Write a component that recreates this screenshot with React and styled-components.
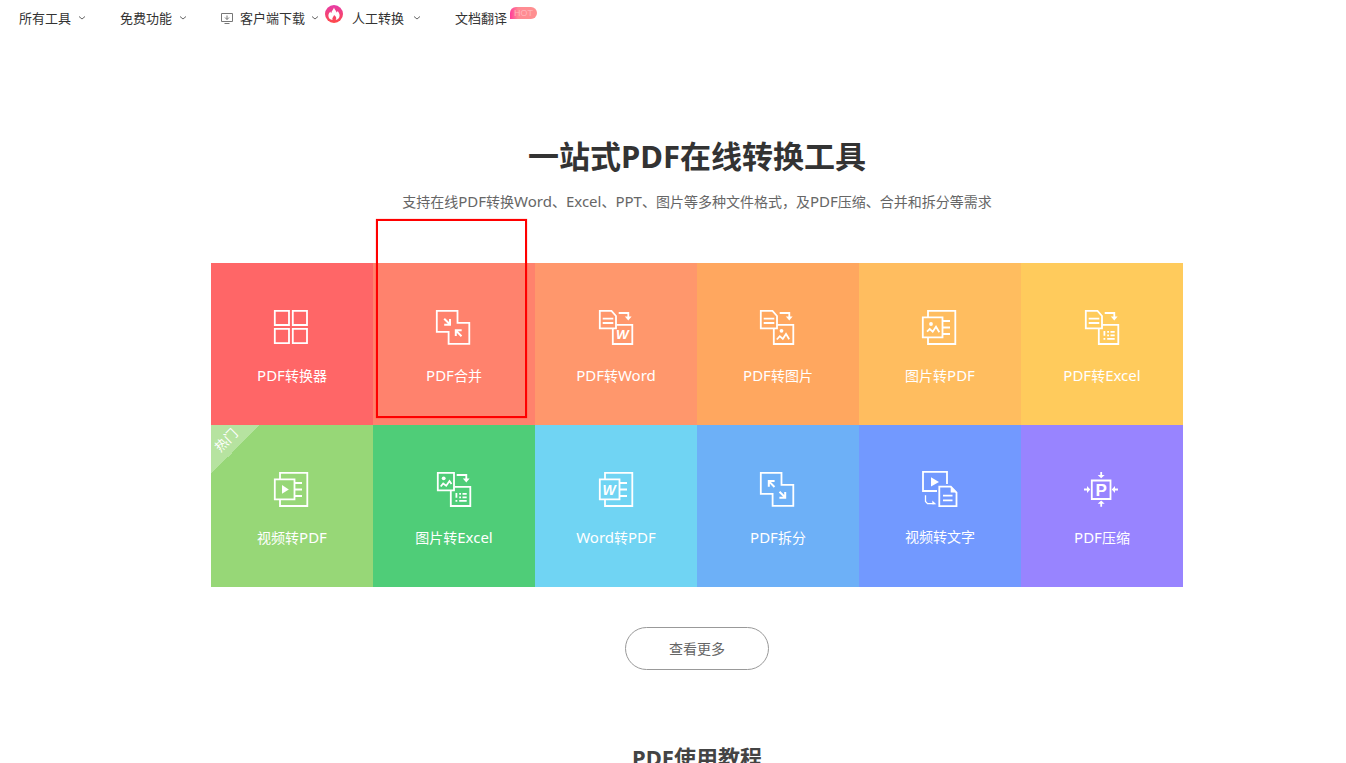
import styled, { createGlobalStyle } from 'styled-components'

const GlobalStyle = createGlobalStyle`
	* {
		box-sizing: border-box;
	}
	body {
		margin: 0;
		background: #fff;
		color: #333;
		font-family: 'Noto Sans', 'Noto Sans CJK SC', sans-serif;
	}
	a {
		color: inherit;
		text-decoration: none;
	}
`

const Nav = styled.nav`
	display: flex;
	align-items: center;
	height: 36px;
	padding-left: 19px;
	font-size: 13px;
	line-height: 20px;
`

const NavItem = styled.a`
	display: flex;
	align-items: center;
	gap: ${props => props.$gap || 7}px;
	margin-right: ${props => props.$space || 0}px;
`

const Hot = styled.span`
	align-self: flex-start;
	width: 27px;
	margin: 7px 0 0 3px;
	border-radius: 6px 6px 6px 0;
	background: linear-gradient(90deg, #ff3c9a, #ff8a94 30%, #ff9090);
	color: #ffb3ba;
	font: 9px/12px 'Liberation Sans', sans-serif;
	text-align: center;
`

const Main = styled.main`
	display: flex;
	flex-direction: column;
	align-items: center;
	padding: 98px 0 0 48px;
`

const Title = styled.h1`
	margin: 0;
	font-size: 31px;
	line-height: 44px;
`

const Subtitle = styled.p`
	margin: 13px 0 51px;
	color: #666;
	font-size: 14px;
	line-height: 20px;
`

const Latin = styled.span`
	font-size: 15px;
`

const Grid = styled.ul`
	display: grid;
	grid-template-columns: repeat(6, 162px);
	margin: 0;
	padding: 0;
	list-style: none;
`

const Cell = styled.li`
	position: relative;
`

const Tile = styled.a`
	display: flex;
	flex-direction: column;
	align-items: center;
	gap: 19px;
	height: 162px;
	padding-top: 47px;
	background: ${props => props.$color};
	color: #fff;
	font-size: 14px;
	line-height: 20px;
`

const Ribbon = styled.span`
	position: absolute;
	top: 0;
	left: 0;
	width: 49px;
	height: 49px;
	background: linear-gradient(135deg, rgba(255, 255, 255, .3) 50%, transparent 50%);
	color: #fff;
	font-size: 13px;
	line-height: 20px;
	span {
		position: absolute;
		top: 5px;
		left: 2px;
		transform: rotate(-45deg);
	}
`

const Marker = styled.span`
	position: absolute;
	z-index: 1;
	top: -44px;
	left: 3px;
	width: 151px;
	height: 199px;
	border: 2px solid #f00;
	box-shadow: 0 0 1px rgba(255, 0, 0, .6);
	pointer-events: none;
`

const More = styled.button`
	width: 144px;
	height: 43px;
	margin: 40px 0 71px;
	padding: 0 0 2px;
	border: 1px solid #999;
	border-radius: 22px;
	background: #fff;
	color: #666;
	font-family: inherit;
	font-size: 14px;
	cursor: pointer;
`

const Tutorial = styled.h2`
	margin: 0;
	color: #444;
	font-size: 22px;
	line-height: 32px;
`

const Svg = styled.svg`
	display: block;
	width: 36px;
	height: 36px;
	overflow: visible;
	fill: none;
	stroke: #fff;
	stroke-width: 1.8;
	text {
		fill: #fff;
		stroke: none;
		font-family: 'Liberation Sans', sans-serif;
	}
	.solid {
		fill: #fff;
		stroke: none;
	}
`

const Flame = styled.svg`
	margin-bottom: 8px;
`

const Chevron = () => (
	<svg width="8" height="6" viewBox="0 0 8 6" fill="none" stroke="#666">
		<path d="M1 1.5 4 4l3-2.5" />
	</svg>
)

const IconDownload = () => (
	<svg width="13" height="13" viewBox="0 0 13 13" fill="none" stroke="#777">
		<path d="M.5 1.5h11v8H.5zM3.5 11.5h5M6 3.5v4M4 5.5l2 2 2-2" />
	</svg>
)

const IconFlame = () => (
	<Flame width="18" height="18" viewBox="0 0 18 18">
		<defs>
			<linearGradient id="flame" x1="0" y1="0" x2="0" y2="1">
				<stop offset="0" stopColor="#e63aa8" />
				<stop offset="1" stopColor="#ff4a48" />
			</linearGradient>
		</defs>
		<circle cx="9" cy="9" r="9" fill="url(#flame)" />
		<path fill="#fff" d="M9 2.5c.4 2.2 2.2 3.1 2.7 5 .5-.4.8-.9.9-1.5 1.2 1.4 2 2.8 2 4.5 0 2.5-1.7 4.1-3.9 4.6 1-1.5.8-3.4-1.7-5.1-.2 1.900-2.400 2.800-1.300 5.100C5 14.700 3.400 13 3.400 10.700c0-1.800 1-3 1.900-4.200.2.700.5 1.200 1 1.600C6.500 5.800 8.500 4.700 9 2.500z" />
	</Flame>
)

// pieces shared by the tool icons
const Sheet = () => <path d="M1.800.8h11.700l4.500 5.200v12.300H1.800zM4.700 8.700h10.600M4.700 13h10.600" />
const Turn = () => (
	<>
		<path d="M20.700 3h9.600v5" />
		<path className="solid" d="M26.800 6.500h6.800L30.300 10.500z" />
	</>
)
const Target = () => <path d="M18.500 14.800h15.800v19.200H14.800V18.500" />
const Cells = () => (
	<path className="solid" d="M19.500 21h1.800v4.700h-1.800zM19.500 28h1.800v1.800h-1.800zM23.200 21H25v1.800h-1.800zM23.200 24.500H25v1.800h-1.800zM23.200 28h7.500v1.800h-7.500zM26.500 21h4.200v1.800h-4.200zM26.500 24.500h4.200v1.800h-4.200z" />
)
const Book = () => (
	<path d="M6 7.400V.8h27.300v33.200H6v-6.600M.8 7.400h19.700v20H.8zM21 11h7M21 17.500h7M21 24h7" />
)
const Blocks = () => <path d="M.8.8h20.700v12h11.800v21H12.600v-12H.8z" />

const icons = {
	grid: <path d="M.8.8h14.200v14.200H.8zM18.800.8h14.200v14.200H18.800zM.8 18.800h14.200v14.400H.8zM18.800 18.800h14.200v14.400H18.800z" />,
	merge: (
		<>
			<Blocks />
			<path strokeWidth="2" d="m8.200 8.700 5.600 5.600M14 9v5.700H8.200M25.500 26.200l-5.500-5.600M19.800 26v-5.700h5.900" />
		</>
	),
	split: (
		<>
			<Blocks />
			<path strokeWidth="2" d="m14.500 15-5.500-5.600M8.800 14.700V9.100h5.800M19.500 19.700l5.500 5.600M25.200 20v5.700h-5.800" />
		</>
	),
	word: (
		<>
			<Sheet />
			<Turn />
			<Target />
			<text x="18" y="29.300" fontSize="13.500" fontStyle="italic" fontWeight="bold">W</text>
		</>
	),
	image: (
		<g transform="translate(-1 0)">
			<Sheet />
			<Turn />
			<Target />
			<circle className="solid" cx="22.500" cy="20.800" r="1.900" />
			<path d="m17.800 29.500 3-3.300 3 2.700 3.200-5 3.200 5.400" />
		</g>
	),
	excel: (
		<>
			<Sheet />
			<Turn />
			<Target />
			<Cells />
		</>
	),
	imageExcel: (
		<>
			<path d="M1.800.8h16.200v17.500H1.800zM4.700 14.500l2.500-3 3 2.200 3.300-4.600 2 3" />
			<circle className="solid" cx="7.700" cy="6.300" r="1.900" />
			<Turn />
			<Target />
			<Cells />
		</>
	),
	imageBook: (
		<>
			<Book />
			<circle className="solid" cx="9" cy="14" r="1.900" />
			<path d="m5 21.700 2.700-2.700 3 2.700 3.300-5 3.300 5.500" />
		</>
	),
	videoBook: (
		<>
			<Book />
			<path className="solid" d="M8 13v8.700l6.800-4.300z" />
		</>
	),
	wordBook: (
		<g transform="translate(1 0)">
			<Book />
			<text x="3.500" y="22.500" fontSize="14" fontStyle="italic" fontWeight="bold">W</text>
		</g>
	),
	videoText: (
		<>
			<path d="M15 19H1V-.2h24V12M17.300 14.700h11.500l5.700 5.800v13.700H17.300zM21 23.700h9.500M21 28.300h9.500" />
			<path className="solid" d="M9 5.300v9.200l8-4.600zM28.700 14v6.500H35z" />
			<path strokeWidth="1.300" d="M3.500 23.300v6.200l2 2.200h7" />
			<path className="solid" d="M10.300 28.500v3.800h4z" />
		</>
	),
	compress: (
		<>
			<path d="M7.800 8.500h18.700v18.500H7.800zM17.200 0v4M17.200 34.700v-4M0 17.500h4M34 17.500h-4" />
			<path className="solid" d="M13.700 3h7l-3.500 3.300zM13.700 31.700h7l-3.500-3.300zM3 14v7l3.300-3.500zM31 14v7l-3.300-3.500z" />
			<text x="11.500" y="23.500" fontSize="17" fontWeight="bold">P</text>
		</>
	),
}

const tools = [
	{ label: 'PDF转换器', color: '#ff6667', icon: 'grid' },
	{ label: 'PDF合并', color: '#ff826d', icon: 'merge', marked: true },
	{ label: 'PDF转Word', color: '#ff976c', icon: 'word' },
	{ label: 'PDF转图片', color: '#ffa75f', icon: 'image' },
	{ label: '图片转PDF', color: '#ffbd5f', icon: 'imageBook' },
	{ label: 'PDF转Excel', color: '#ffcb5c', icon: 'excel' },
	{ label: '视频转PDF', color: '#97d777', icon: 'videoBook', hot: true },
	{ label: '图片转Excel', color: '#4fcd78', icon: 'imageExcel' },
	{ label: 'Word转PDF', color: '#70d4f3', icon: 'wordBook' },
	{ label: 'PDF拆分', color: '#6db0f7', icon: 'split' },
	{ label: '视频转文字', color: '#7299ff', icon: 'videoText' },
	{ label: 'PDF压缩', color: '#9884ff', icon: 'compress' },
]

// latin words run one size larger than the chinese around them
const Mixed = ({ children }) => (
	<span>
		{children.split(/([A-Za-z]+)/).map((part, i) => (i % 2 ? <Latin key={i}>{part}</Latin> : part))}
	</span>
)

export default function App() {
	return (
		<>
			<GlobalStyle />
			<header>
				<Nav>
					<NavItem href="#all" $space={34}>所有工具<Chevron /></NavItem>
					<NavItem href="#free" $space={34}>免费功能<Chevron /></NavItem>
					<NavItem href="#client" $gap={6} $space={6}><IconDownload />客户端下载<Chevron /></NavItem>
					<NavItem href="#manual" $gap={9} $space={34}><IconFlame />人工转换<Chevron /></NavItem>
					<NavItem href="#translate">文档翻译</NavItem>
					<Hot>HOT</Hot>
				</Nav>
			</header>
			<Main>
				<Title>一站式PDF在线转换工具</Title>
				<Subtitle>
					<Mixed>支持在线PDF转换Word、Excel、PPT、图片等多种文件格式，及PDF压缩、合并和拆分等需求</Mixed>
				</Subtitle>
				<Grid>
					{tools.map(tool => (
						<Cell key={tool.label}>
							<Tile href={'#' + tool.icon} $color={tool.color}>
								<Svg viewBox="0 0 36 36">{icons[tool.icon]}</Svg>
								<Mixed>{tool.label}</Mixed>
							</Tile>
							{tool.hot && <Ribbon><span>热门</span></Ribbon>}
							{tool.marked && <Marker />}
						</Cell>
					))}
				</Grid>
				<More type="button">查看更多</More>
				<Tutorial>PDF使用教程</Tutorial>
			</Main>
		</>
	)
}
